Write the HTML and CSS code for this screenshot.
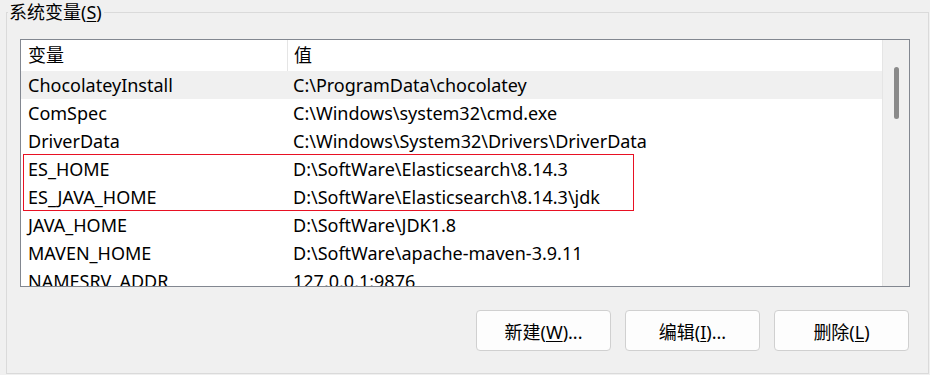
FILE: index.html
```html
<!DOCTYPE html>
<html lang="zh-CN">
<head>
    <meta charset="UTF-8">
    <title>系统变量</title>
    <link rel="stylesheet" href="styles.css">
</head>
<body>
<div class="group">
    <div class="group-title">系统变量(<u>S</u>)</div>

    <div class="list">
        <div class="list-main">
            <div class="head">
                <div class="col name">变量</div>
                <div class="col value">值</div>
            </div>
            <div class="rows">
                <div class="row hover"><div class="col name">ChocolateyInstall</div><div class="col value">C:\ProgramData\chocolatey</div></div>
                <div class="row"><div class="col name">ComSpec</div><div class="col value">C:\Windows\system32\cmd.exe</div></div>
                <div class="row"><div class="col name">DriverData</div><div class="col value">C:\Windows\System32\Drivers\DriverData</div></div>
                <div class="row"><div class="col name">ES_HOME</div><div class="col value">D:\SoftWare\Elasticsearch\8.14.3</div></div>
                <div class="row"><div class="col name">ES_JAVA_HOME</div><div class="col value">D:\SoftWare\Elasticsearch\8.14.3\jdk</div></div>
                <div class="row"><div class="col name">JAVA_HOME</div><div class="col value">D:\SoftWare\JDK1.8</div></div>
                <div class="row"><div class="col name">MAVEN_HOME</div><div class="col value">D:\SoftWare\apache-maven-3.9.11</div></div>
                <div class="row"><div class="col name">NAMESRV_ADDR</div><div class="col value">127.0.0.1:9876</div></div>
                <!-- 红框标注 ES 两行 -->
                <div class="mark"></div>
            </div>
        </div>
        <div class="scrollbar">
            <div class="thumb"></div>
        </div>
    </div>

    <div class="buttons">
        <button class="btn">新建(<u>W</u>)...</button>
        <button class="btn">编辑(<u>I</u>)...</button>
        <button class="btn">删除(<u>L</u>)</button>
    </div>
</div>
</body>
</html>
```

FILE: styles.css
```css
body {
    margin: 0;
    background-color: #f0f0f0;
    font-family: "Noto Sans", "Noto Sans CJK SC", sans-serif;
    font-size: 18px;
    color: #000;
}
u {
    text-underline-offset: 2px;
}
.group {
    margin: 12px 1px 0 6px;
    height: 360px;
    border: 1px solid #dadada;
}
.group-title {
    width: fit-content;
    margin: -13px 0 0 1px;
    padding: 0 2px 0 1px;
    height: 24px;
    line-height: 24px;
    background-color: #f0f0f0;
}
.list {
    display: flex;
    margin: 15px 18px 0 13px;
    height: 246px;
    border: 1px solid #828790;
    background-color: #fff;
    overflow: hidden;
}
.list-main {
    flex: 1;
    border-right: 1px solid #e5e5e5;
}
.scrollbar {
    width: 26px;
    background-color: #f0f0f0;
    display: flex;
    justify-content: center;
}
.thumb {
    width: 5px;
    height: 52px;
    margin-top: 27px;
    margin-left: 1px;
    border-radius: 3px;
    background-color: #8a8a8a;
}
.head {
    display: flex;
    height: 31px;
    line-height: 31px;
}
.head .name {
    border-right: 1px solid #e5e5e5;
}
.rows {
    position: relative;
}
.row {
    display: flex;
    height: 28px;
    line-height: 28px;
}
.row.hover {
    background-color: #f0f0f0;
}
.col {
    white-space: nowrap;
}
.name {
    width: 259px;
    padding-left: 7px;
}
.value {
    padding-left: 6px;
}
.mark {
    position: absolute;
    left: 2px;
    top: 83px;
    width: 609px;
    height: 55px;
    border: 1px solid #e81123;
}
.buttons {
    display: flex;
    justify-content: flex-end;
    gap: 14px;
    margin: 23px 19px 0 0;
}
.btn {
    width: 135px;
    height: 41px;
    border: 1px solid #d0d0d0;
    border-radius: 4px;
    background-color: #fdfdfd;
    font-family: "Noto Sans", "Noto Sans CJK SC", sans-serif;
    font-size: 18px;
    color: #000;
    padding: 0;
}
```
